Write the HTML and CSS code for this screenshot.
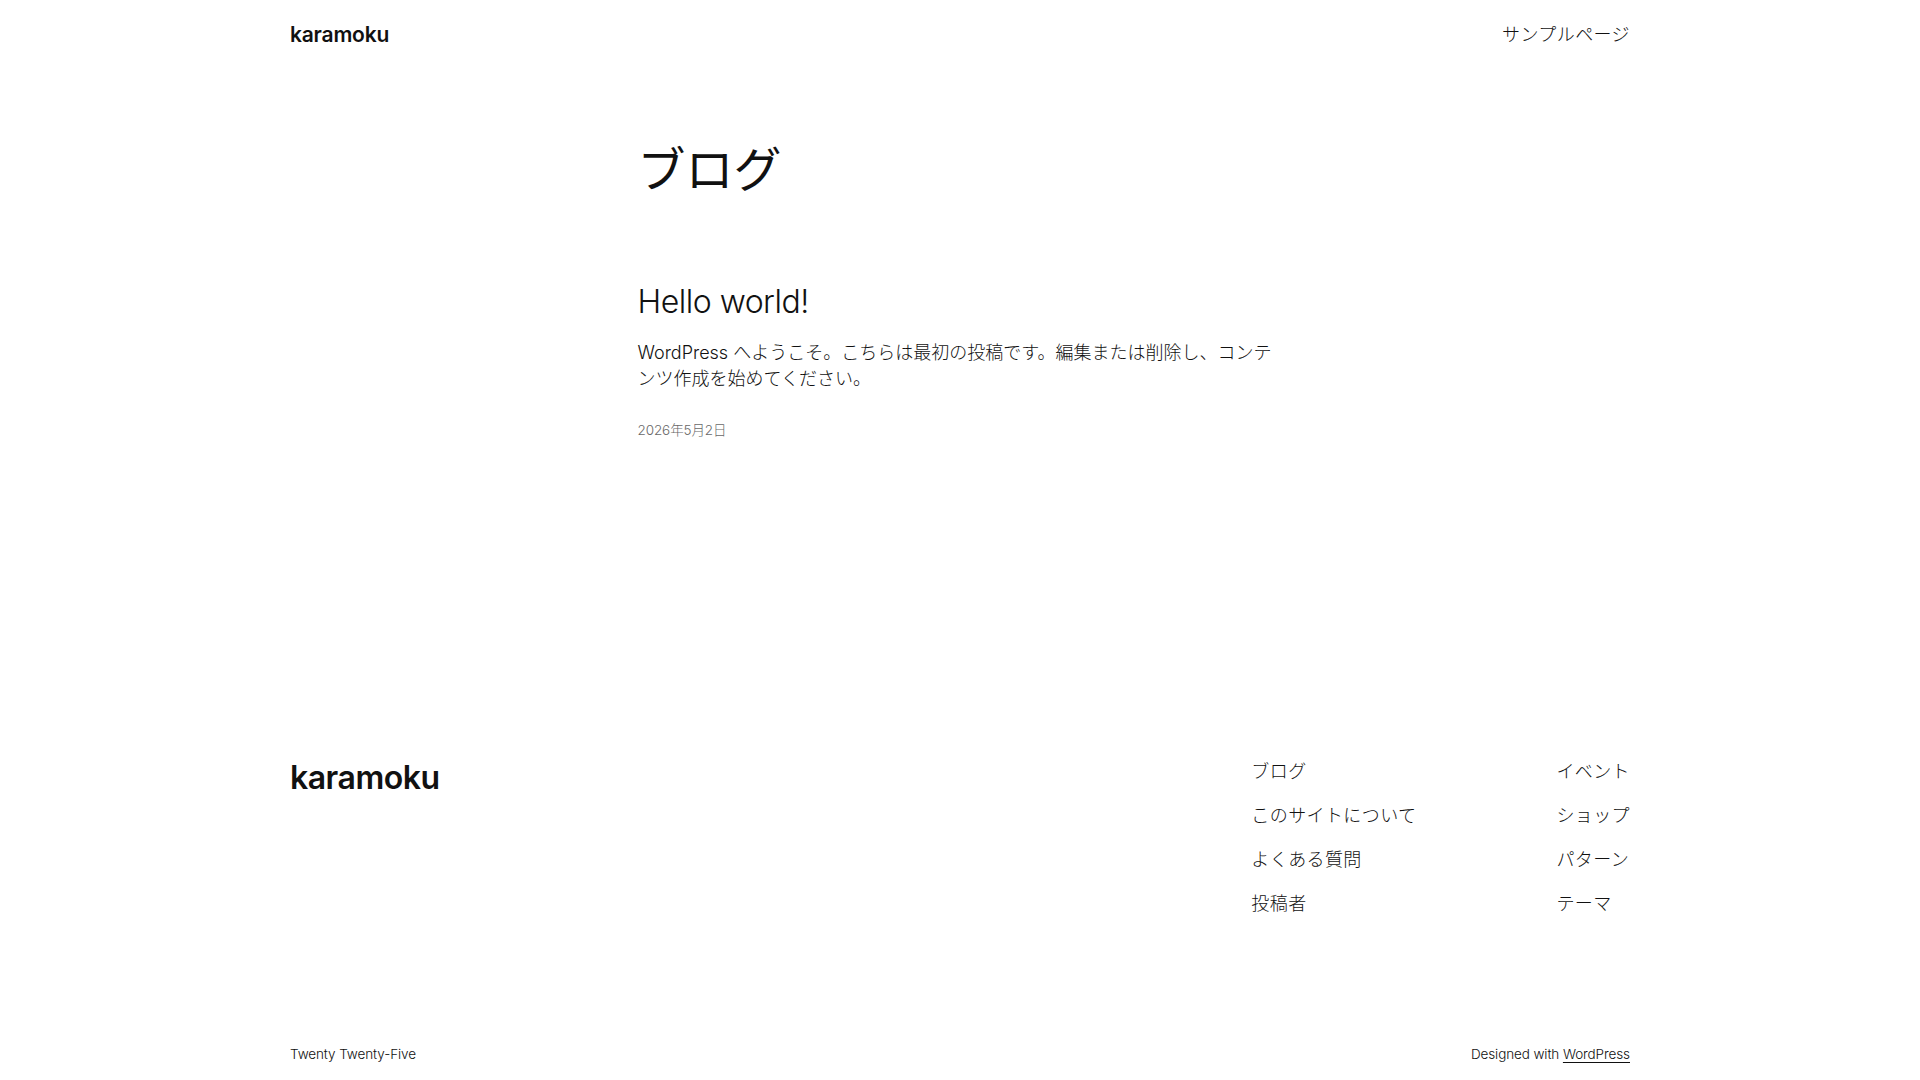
FILE: index.html
```html
<!DOCTYPE html>
<html lang="ja">
<head>
<meta charset="utf-8">
<title>karamoku</title>
<link rel="stylesheet" href="styles.css">
</head>
<body>
<header class="site-header">
  <a class="site-title" href="#">karamoku</a>
  <nav class="header-nav"><a href="#">サンプルページ</a></nav>
</header>
<main class="site-main">
  <h1 class="page-title">ブログ</h1>
  <article class="post">
    <h2 class="post-title"><a href="#">Hello world!</a></h2>
    <p class="post-excerpt">WordPress へようこそ。こちらは最初の投稿です。編集または削除し、コンテンツ作成を始めてください。</p>
    <div class="post-date">2026年5月2日</div>
  </article>
</main>
<footer class="site-footer">
  <div class="footer-top">
    <a class="footer-title" href="#">karamoku</a>
    <div class="footer-navs">
      <ul class="footer-nav">
        <li><a href="#">ブログ</a></li>
        <li><a href="#">このサイトについて</a></li>
        <li><a href="#">よくある質問</a></li>
        <li><a href="#">投稿者</a></li>
      </ul>
      <ul class="footer-nav">
        <li><a href="#">イベント</a></li>
        <li><a href="#">ショップ</a></li>
        <li><a href="#">パターン</a></li>
        <li><a href="#">テーマ</a></li>
      </ul>
    </div>
  </div>
  <div class="footer-bottom">
    <p>Twenty Twenty-Five</p>
    <p>Designed with <a href="#" class="underline">WordPress</a></p>
  </div>
</footer>
</body>
</html>
```
FILE: styles.css
```css
* { box-sizing: border-box; }
html, body { margin: 0; padding: 0; }
body {
  background: #ffffff;
  color: #111111;
  font-family: "Inter", "Noto Sans CJK JP", sans-serif;
  font-weight: 300;
  letter-spacing: -0.1px;
}
a { color: inherit; text-decoration: none; }

.site-header {
  width: 1340px;
  margin: 0 auto;
  display: flex;
  justify-content: space-between;
  align-items: center;
  padding: 21px 0 19px;
}
.site-title {
  font-size: 21px;
  line-height: 28px;
  font-weight: 600;
  letter-spacing: -0.2px;
}
.header-nav {
  font-size: 18px;
  line-height: 26px;
  letter-spacing: 0.4px;
}

.site-main {
  width: 645px;
  margin: 0 auto;
  padding-top: 75px;
  min-height: 691px;
}
.page-title {
  margin: 0;
  font-size: 48px;
  line-height: 54px;
  font-weight: 400;
  letter-spacing: 0;
}
.post { margin-top: 86px; }
.post-title {
  margin: 0;
  font-size: 32px;
  line-height: 38px;
  font-weight: 300;
  letter-spacing: -0.5px;
}
.post-excerpt {
  margin: 19px 0 0;
  font-size: 18px;
  line-height: 26px;
  letter-spacing: 0;
}
.post-date {
  margin-top: 28px;
  font-size: 13.5px;
  line-height: 20px;
  color: #686868;
}

.site-footer {
  width: 1340px;
  margin: 0 auto;
}
.footer-top {
  display: flex;
  justify-content: space-between;
  align-items: flex-start;
}
.footer-title {
  font-size: 32px;
  line-height: 38px;
  font-weight: 600;
  letter-spacing: -0.5px;
}
.footer-navs {
  display: flex;
  gap: 140px;
}
.footer-nav {
  list-style: none;
  margin: 0;
  padding: 0;
  display: flex;
  flex-direction: column;
  gap: 18px;
  font-size: 18px;
  line-height: 26px;
  letter-spacing: 0.4px;
}
.footer-bottom {
  display: flex;
  justify-content: space-between;
  margin-top: 127px;
  font-size: 13.5px;
  line-height: 20px;
}
.footer-bottom p { margin: 0; }
.underline { text-decoration: underline; text-underline-offset: 3px; }
```
